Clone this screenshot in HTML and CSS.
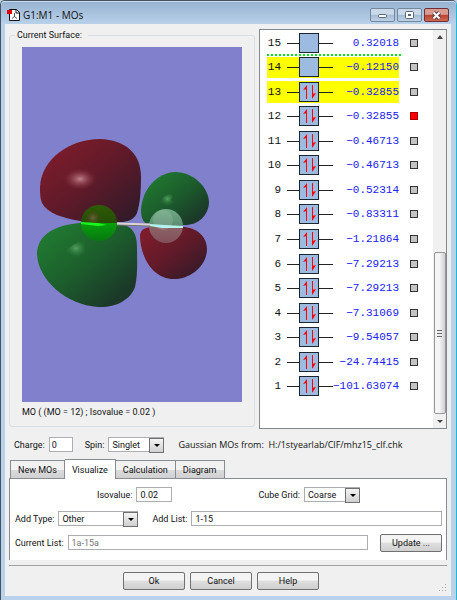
FILE: index.html
```html
<!DOCTYPE html>
<html lang="en">
<head>
    <meta charset="UTF-8">
    <meta name="viewport" content="width=device-width, initial-scale=1.0">
    <title>G1:M1 - MOs</title>
    <link rel="stylesheet" href="styles.css">
</head>
<body>
    <!-- Shared symbols -->
    <svg class="symbols" width="0" height="0">
        <symbol id="empty" viewBox="0 0 46 20">
            <path d="M0 10.5H46" stroke="#222"/>
            <rect x="12.5" y=".5" width="19" height="19" fill="#9dbbe0" stroke="#1c2630"/>
        </symbol>
        <symbol id="filled" viewBox="0 0 46 20">
            <path d="M0 10.5H46" stroke="#222"/>
            <rect x="12.5" y=".5" width="19" height="19" fill="#9dbbe0" stroke="#1c2630"/>
            <path d="M19.500 17V4M25.500 3v13" stroke="#f00"/>
            <path d="M20 3v4l-4 1zM25 17v-5l4-1z" fill="#f00"/>
        </symbol>
    </svg>

    <div class="window">
        <div class="titlebar">
            <svg class="app-icon" width="14" height="14" viewBox="0 0 14 14">
                <path d="M2.500 1.500H9.500L12.500 4.500V12.500H2.500Z" fill="#fff" stroke="#111"/>
                <path d="M9 1v4h4" fill="none" stroke="#111"/>
                <path d="M7.500 5v4M7.500 8.500l-2.500 2M7.500 8.500l2.500 2" stroke="#555" fill="none"/>
                <rect x="0" y="2" width="5" height="4" fill="#e00000"/>
            </svg>
            <h1>G1:M1 - MOs</h1>
            <button class="win-button" aria-label="Minimize"><svg width="11" height="9" viewBox="0 0 11 9"><rect x="1.500" y="3.500" width="8" height="3" rx="1" fill="#fff" stroke="#5d6673"/></svg></button>
            <button class="win-button" aria-label="Maximize"><svg width="11" height="9" viewBox="0 0 11 9"><rect x="1.500" y=".5" width="8" height="7" rx="1" fill="#fff" stroke="#5d6673"/><rect x="4.500" y="3.500" width="2" height="1" fill="none" stroke="#5d6673"/></svg></button>
            <button class="win-button close" aria-label="Close"><svg width="11" height="9" viewBox="0 0 11 9"><path d="M2.500 1.500l6 6M8.500 1.500l-6 6" stroke="#5a3a42" stroke-width="4"/><path d="M2.500 1.500l6 6M8.500 1.500l-6 6" stroke="#fff" stroke-width="2"/></svg></button>
        </div>

        <div class="content">
            <div class="top">
                <fieldset class="surface">
                    <legend>Current Surface:</legend>
                    <svg class="surface-view" viewBox="0 0 220 355" preserveAspectRatio="xMidYMid slice">
                        <defs>
                            <linearGradient id="redLobe" x1="0" y1="0" x2="1" y2="1">
                                <stop offset=".1" stop-color="#7e1c2b"/>
                                <stop offset=".5" stop-color="#601a29"/>
                                <stop offset=".9" stop-color="#351a29"/>
                            </linearGradient>
                            <linearGradient id="greenLobe" x1="0" y1="0" x2="1" y2="1">
                                <stop offset=".1" stop-color="#207a30"/>
                                <stop offset=".5" stop-color="#1c5c2c"/>
                                <stop offset=".85" stop-color="#1b3829"/>
                            </linearGradient>
                            <radialGradient id="redShine">
                                <stop offset="0" stop-color="#c08490"/>
                                <stop offset=".4" stop-color="#a05562" stop-opacity=".7"/>
                                <stop offset="1" stop-color="#7e2435" stop-opacity="0"/>
                            </radialGradient>
                            <radialGradient id="greenShine">
                                <stop offset="0" stop-color="#56a060"/>
                                <stop offset="1" stop-color="#2a7c3a" stop-opacity="0"/>
                            </radialGradient>
                            <linearGradient id="chlorine" x1="0" y1="0" x2="0" y2="1">
                                <stop offset="0" stop-color="#2e5c05"/>
                                <stop offset=".5" stop-color="#264c04"/>
                                <stop offset=".5" stop-color="#06a00a"/>
                                <stop offset="1" stop-color="#087810"/>
                            </linearGradient>
                            <linearGradient id="fluorine" x1="0" y1="0" x2="0" y2="1">
                                <stop offset="0" stop-color="#6fab84"/>
                                <stop offset=".5" stop-color="#5b8c70"/>
                                <stop offset=".55" stop-color="#8c6266"/>
                                <stop offset="1" stop-color="#80505a"/>
                            </linearGradient>
                        </defs>
                        <rect x="-400" width="1020" height="355" fill="#8080cc"/>
                        <path d="M18 140C19 112 48 92 78 92C103 93 119 106 119 130C119 145 118 156 115 166C112 173 105 175 98 175L58 174C40 171 25 166 20 156C18 151 18 146 18 140Z" fill="url(#redLobe)"/>
                        <ellipse cx="58" cy="132" rx="17" ry="11" fill="url(#redShine)"/>
                        <path d="M15 206C16 188 32 178 58 176L96 177C110 178 115 186 115 200C115 212 116 228 113 240C108 254 92 261 76 260C44 258 15 232 15 206Z" fill="url(#greenLobe)"/>
                        <path d="M43 204Q50 197 64 192Q61 203 65 210Q54 212 43 204Z" fill="url(#greenShine)"/>
                        <path d="M119 163C120 143 134 126 153 125C172 125 187 141 187 156C186 169 176 178 163 178H130C122 178 119 172 119 163Z" fill="url(#greenLobe)"/>
                        <path d="M138 155Q142 147 153 145L149 153L153 156Q144 162 138 155Z" fill="url(#greenShine)"/>
                        <path d="M118 188C119 182 124 180 131 180H160C175 180 185 190 185 202C185 219 168 232 153 232C131 233 118 210 118 188Z" fill="url(#redLobe)"/>
                        <circle cx="77" cy="176" r="18" fill="url(#chlorine)"/>
                        <circle cx="71" cy="171" r="8" fill="url(#redShine)" opacity=".4"/>
                        <circle cx="144" cy="179" r="17" fill="url(#fluorine)"/>
                        <circle cx="141" cy="173" r="10" fill="#c0d8cc" opacity=".2"/>
                        <path d="M95 177L128 178" stroke="#77706f" stroke-width="3"/>
                        <path d="M95 176.500L128 177.500" stroke="#dcd2da" stroke-width="2"/>
                        <path d="M59 175L76 176L85 178L76 179L59 177Z" fill="#19f51b"/>
                        <path d="M128 177L143 178L161 179V181L140 181L128 179Z" fill="#b5f2ee"/>
                    </svg>
                    <p class="caption">MO ( (MO = 12) ; Isovalue = 0.02 )</p>
                </fieldset>

                <div class="mo-list">
                    <table>
                        <tr class="lumo"><th>15</th><td><svg><use href="#empty"/></svg></td><td class="energy">0.32018</td><td class="pick"><input type="checkbox" aria-label="MO 15"></td></tr>
                        <tr class="marked"><th>14</th><td><svg><use href="#empty"/></svg></td><td class="energy">−0.12150</td><td class="pick"><input type="checkbox" aria-label="MO 14"></td></tr>
                        <tr class="marked"><th>13</th><td><svg><use href="#filled"/></svg></td><td class="energy">−0.32855</td><td class="pick"><input type="checkbox" aria-label="MO 13"></td></tr>
                        <tr><th>12</th><td><svg><use href="#filled"/></svg></td><td class="energy">−0.32855</td><td class="pick"><input type="checkbox" aria-label="MO 12" checked></td></tr>
                        <tr><th>11</th><td><svg><use href="#filled"/></svg></td><td class="energy">−0.46713</td><td class="pick"><input type="checkbox" aria-label="MO 11"></td></tr>
                        <tr><th>10</th><td><svg><use href="#filled"/></svg></td><td class="energy">−0.46713</td><td class="pick"><input type="checkbox" aria-label="MO 10"></td></tr>
                        <tr><th>9</th><td><svg><use href="#filled"/></svg></td><td class="energy">−0.52314</td><td class="pick"><input type="checkbox" aria-label="MO 9"></td></tr>
                        <tr><th>8</th><td><svg><use href="#filled"/></svg></td><td class="energy">−0.83311</td><td class="pick"><input type="checkbox" aria-label="MO 8"></td></tr>
                        <tr><th>7</th><td><svg><use href="#filled"/></svg></td><td class="energy">−1.21864</td><td class="pick"><input type="checkbox" aria-label="MO 7"></td></tr>
                        <tr><th>6</th><td><svg><use href="#filled"/></svg></td><td class="energy">−7.29213</td><td class="pick"><input type="checkbox" aria-label="MO 6"></td></tr>
                        <tr><th>5</th><td><svg><use href="#filled"/></svg></td><td class="energy">−7.29213</td><td class="pick"><input type="checkbox" aria-label="MO 5"></td></tr>
                        <tr><th>4</th><td><svg><use href="#filled"/></svg></td><td class="energy">−7.31069</td><td class="pick"><input type="checkbox" aria-label="MO 4"></td></tr>
                        <tr><th>3</th><td><svg><use href="#filled"/></svg></td><td class="energy">−9.54057</td><td class="pick"><input type="checkbox" aria-label="MO 3"></td></tr>
                        <tr><th>2</th><td><svg><use href="#filled"/></svg></td><td class="energy">−24.74415</td><td class="pick"><input type="checkbox" aria-label="MO 2"></td></tr>
                        <tr><th>1</th><td><svg><use href="#filled"/></svg></td><td class="energy">−101.63074</td><td class="pick"><input type="checkbox" aria-label="MO 1"></td></tr>
                    </table>
                    <div class="scrollbar">
                        <svg width="13" height="14" viewBox="0 0 13 14"><path d="M4 9l3-4 3 4z" fill="#444"/></svg>
                        <div class="thumb"><i></i></div>
                        <svg class="down" width="13" height="14" viewBox="0 0 13 14"><path d="M4 6h6l-3 3z" fill="#444"/></svg>
                    </div>
                </div>
            </div>

            <div class="state">
                <label for="charge">Charge:</label>
                <input type="text" id="charge" value="0">
                <label for="spin">Spin:</label>
                <span class="select"><select id="spin"><option>Singlet</option></select></span>
                <span class="source">Gaussian MOs from:&nbsp; H:/1styearlab/ClF/mhz15_clf.chk</span>
            </div>

            <div class="tabs">
                <button>New MOs</button>
                <button class="active">Visualize</button>
                <button>Calculation</button>
                <button>Diagram</button>
            </div>
            <div class="tab-panel">
                <div class="line options">
                    <label for="isovalue">Isovalue:</label>
                    <input type="text" id="isovalue" value="0.02">
                    <label for="grid" class="grid-label">Cube Grid:</label>
                    <span class="select"><select id="grid"><option>Coarse</option></select></span>
                </div>
                <div class="line">
                    <label for="type">Add Type:</label>
                    <span class="select wide"><select id="type"><option>Other</option></select></span>
                    <label for="add" class="add-label">Add List:</label>
                    <input type="text" id="add" class="grow" value="1-15">
                </div>
                <div class="line">
                    <label for="current">Current List:</label>
                    <input type="text" id="current" class="grow" value="1a-15a" disabled>
                    <button class="button">Update ...</button>
                </div>
            </div>

            <div class="footer">
                <button class="button">Ok</button>
                <button class="button">Cancel</button>
                <button class="button">Help</button>
                <svg class="grip" width="8" height="8" viewBox="0 0 8 8"><path d="M6 0h1v1H6zM3 3h1v1H3zM6 3h1v1H6zM0 6h1v1H0zM3 6h1v1H3zM6 6h1v1H6z" fill="#aaa"/></svg>
            </div>
        </div>
    </div>
</body>
</html>
```
FILE: styles.css
```css
* {
    box-sizing: border-box;
}

body {
    margin: 0;
    background-color: #b9d1ea;
    color: #111;
    font-family: Roboto, "Liberation Sans", sans-serif;
    font-size: 9px;
    line-height: 12px;
}

button, input, select {
    margin: 0;
    padding: 0;
    font: inherit;
    color: inherit;
}

.symbols {
    position: absolute;
}

.window {
    display: flex;
    flex-direction: column;
    min-height: 100vh;
    padding: 0 5px 4px 4px;
    background-color: #b9d1ea;
    border: 1px solid #48525e;
    border-right-color: #20b8d0;
    border-bottom: none;
    border-radius: 5px 5px 0 0;
}

.titlebar {
    display: flex;
    align-items: center;
    gap: 2px;
    height: 23px;
    margin: 0 -5px 0 -4px;
    padding: 4px 7px 0 6px;
    background: linear-gradient(#98b3d1, #b9d1ea);
    border-top: 1px solid #c8dcf0;
    border-radius: 4px 4px 0 0;
}

.titlebar h1 {
    flex: 1;
    margin: 0;
    font-family: "Open Sans", sans-serif;
    font-size: 10px;
    font-weight: normal;
    line-height: 14px;
}

.win-button {
    display: flex;
    align-items: center;
    justify-content: center;
    width: 25px;
    height: 14px;
    background: linear-gradient(#c9d9ea 45%, #a4bbd4 50%, #bdd2e8);
    border: 1px solid #75879b;
    border-radius: 2px;
}

.win-button.close {
    background: linear-gradient(#d99a90 45%, #b8402e 50%, #cf6a50);
    border-color: #6f3036;
}

.content {
    flex: 1;
    padding: 5px 4px;
    background-color: #f0f0f0;
}

.top {
    display: flex;
    align-items: flex-start;
    gap: 4px;
}

.surface {
    flex: 1;
    min-width: 0;
    margin: 0;
    padding: 6px 12px 8px;
    border: 1px solid #d5dfe5;
    border-radius: 3px;
}

.surface legend {
    margin-left: -7px;
    padding: 0 6px 0 2px;
}

.surface-view {
    display: block;
    width: 100%;
    height: 355px;
}

.caption {
    margin: 4px 0 0;
}

.mo-list {
    display: flex;
    justify-content: space-between;
    width: 188px;
    height: 400px;
    padding-left: 7px;
    background-color: #fff;
    border: 1px solid #828790;
}

.mo-list table {
    height: 371px;
    margin-top: -1px;
    border-spacing: 0 3px;
    font-family: "Liberation Mono", monospace;
    font-size: 11px;
}

.mo-list tr {
    position: relative;
}

.mo-list th,
.mo-list td {
    padding: 0;
    font-weight: normal;
    text-align: right;
}

.mo-list th {
    width: 20px;
    padding-right: 6px;
}

.mo-list td svg {
    display: block;
    width: 46px;
    height: 20px;
}

.mo-list .energy {
    width: 66px;
    color: #2020f0;
}

.marked th,
.marked td:not(.pick) {
    background-color: #ff0;
}

.lumo::after {
    content: "";
    position: absolute;
    left: 0;
    bottom: -2px;
    width: 135px;
    height: 2px;
    background: repeating-linear-gradient(90deg, #00e020 0 2px, #fff 2px 4px);
}

.mo-list .pick {
    width: 19px;
}

.pick input {
    display: block;
    width: 8px;
    height: 8px;
    margin-left: 11px;
    appearance: none;
    background-color: #c4c4c4;
    border: 1px solid #333;
}

.pick input:checked {
    background-color: #f00;
    border-color: #a00;
}

.scrollbar {
    display: flex;
    flex-direction: column;
    align-items: center;
    width: 13px;
    background-color: #f0f0f0;
}

.thumb {
    display: flex;
    align-items: center;
    justify-content: center;
    width: 12px;
    height: 162px;
    margin-top: auto;
    background: linear-gradient(90deg, #f4f4f4 45%, #d0d0d4);
    border: 1px solid #979797;
    border-radius: 2px;
}

.thumb i {
    width: 5px;
    height: 7px;
    background: repeating-linear-gradient(#666 0 1px, #eee 1px 3px);
}

input[type="text"] {
    height: 15px;
    padding: 0 3px;
    background-color: #fff;
    border: 1px solid #abadb3;
}

.state {
    display: flex;
    align-items: center;
    padding: 8px 5px 0;
}

#charge {
    width: 24px;
    margin: 0 12px 0 4px;
    padding: 0 2px;
}

.select {
    position: relative;
    width: 56px;
    height: 15px;
    margin-left: 4px;
}

.select.wide {
    width: 80px;
}

.select select {
    display: block;
    width: 100%;
    height: 100%;
    padding: 0 3px;
    appearance: none;
    background-color: #fff;
    border: 1px solid #abadb3;
    border-radius: 0;
}

.select::after {
    content: "";
    position: absolute;
    top: 1px;
    right: 0;
    width: 13px;
    height: 13px;
    background: linear-gradient(#f4f4f4, #d0d0d0);
    border: 1px solid #707070;
    pointer-events: none;
}

.select::before {
    content: "";
    position: absolute;
    z-index: 1;
    top: 7px;
    right: 4px;
    border: solid transparent;
    border-width: 3px 3px 0;
    border-top-color: #000;
    pointer-events: none;
}

.source {
    margin-left: 14px;
    font-family: "Open Sans", sans-serif;
    white-space: nowrap;
}

.tabs {
    display: flex;
    align-items: flex-end;
    margin-top: 7px;
    padding-left: 1px;
}

.tabs button {
    height: 18px;
    padding: 0 7px;
    background: linear-gradient(#f2f2f2 50%, #dcdcdc 50%, #d0d0d0);
    border: 1px solid #898c95;
    border-left: none;
    border-bottom: none;
}

.tabs button:first-child {
    border-left: 1px solid #898c95;
}

.tabs .active {
    height: 20px;
    margin-bottom: -1px;
    background: #fff;
}

.tab-panel {
    display: flex;
    flex-direction: column;
    gap: 9px;
    padding: 8px 4px 10px 5px;
    background-color: #fff;
    border: 1px solid #898c95;
    border-bottom: none;
}

.line {
    display: flex;
    align-items: center;
    height: 15px;
}

.line input {
    margin-left: 4px;
}

.options {
    padding: 0 82px;
}

#isovalue {
    width: 36px;
}

.grid-label {
    margin-left: auto;
}

.add-label {
    margin-left: 14px;
}

.grow {
    flex: 1;
    min-width: 0;
}

#current {
    color: #777;
    background-color: #fff;
}

.button {
    width: 62px;
    height: 18px;
    background: linear-gradient(#f4f4f4 45%, #dedede 50%, #d0d0d0);
    border: 1px solid #707070;
    border-radius: 2px;
}

.line .button {
    margin-left: 12px;
}

.footer {
    display: flex;
    justify-content: center;
    gap: 5px;
    position: relative;
    margin-top: 5px;
    padding: 6px 14px 0 0;
    border-top: 1px solid #a0a0a0;
}

.grip {
    position: absolute;
    right: 0;
    bottom: -2px;
}
```
